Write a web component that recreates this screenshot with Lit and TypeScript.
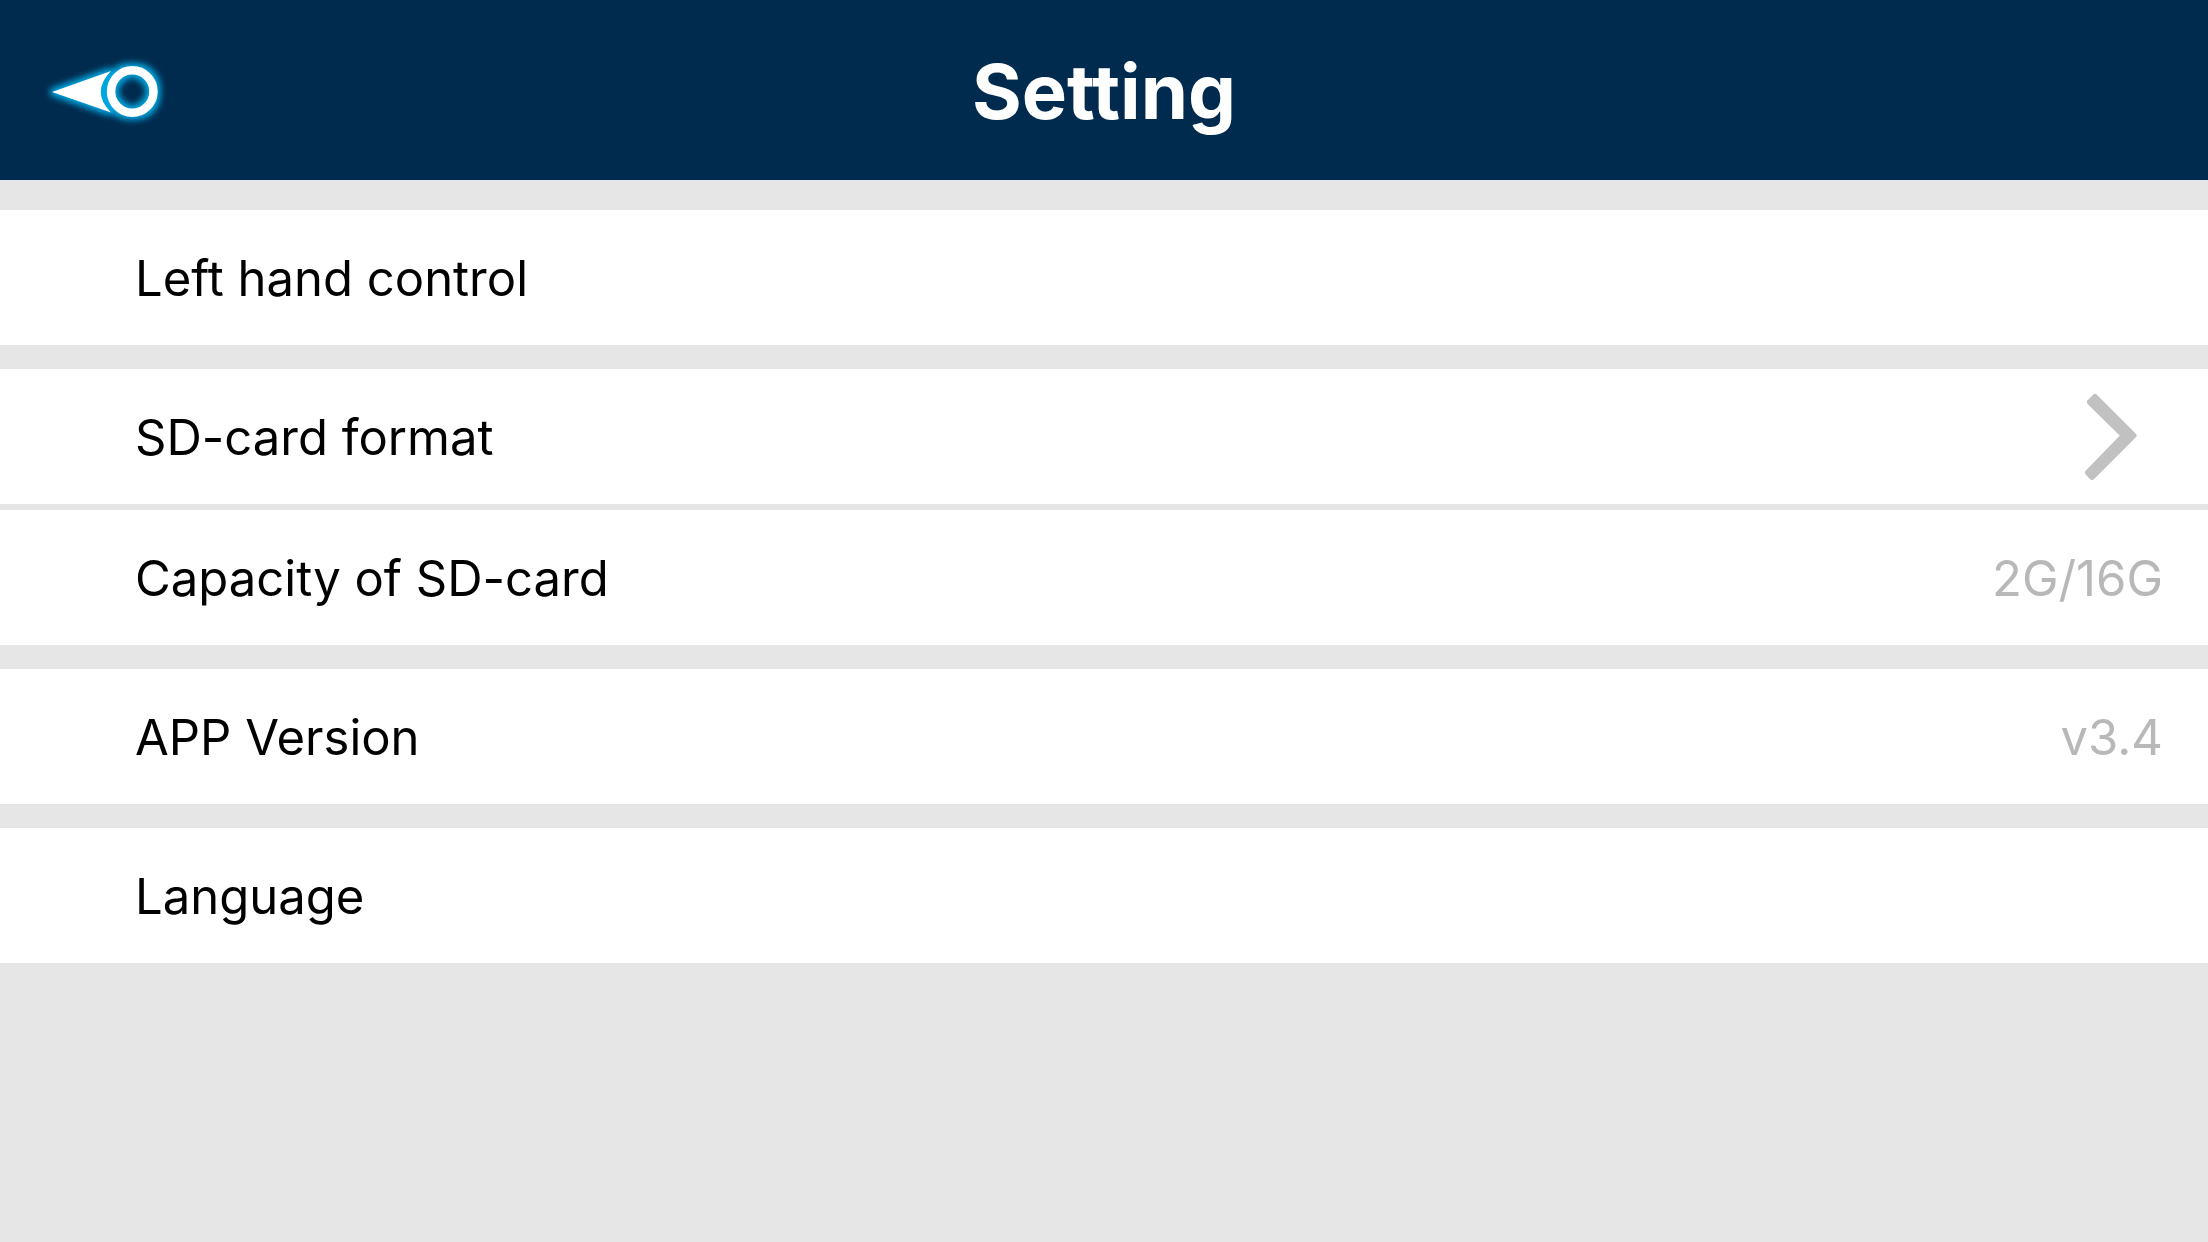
import { LitElement, html, css, nothing } from "lit";
import { customElement } from "lit/decorators.js";

interface SettingItem {
  label: string;
  value?: string;
  action?: boolean;
  chevron?: boolean;
}

const GROUPS: SettingItem[][] = [
  [{ label: "Left hand control", action: true }],
  [
    { label: "SD-card format", action: true, chevron: true },
    { label: "Capacity of SD-card", value: "2G/16G" },
  ],
  [{ label: "APP Version", value: "v3.4" }],
  [{ label: "Language", action: true }],
];

@customElement("app-root")
export class AppRoot extends LitElement {
  static styles = css`
    :host {
      display: flex;
      flex-direction: column;
      min-height: 100vh;
      background: #e6e6e6;
      color: #000;
      font-family: Inter, "Liberation Sans", sans-serif;
      font-size: 49px;
      line-height: 60px;
    }
    .header {
      display: grid;
      grid-template-columns: 1fr auto 1fr;
      align-items: center;
      height: 180px;
      padding: 0 36px;
      background: #002b4e;
      color: #fff;
    }
    .title {
      margin: 0;
      padding-top: 2px;
      font-size: 76px;
      line-height: 90px;
      font-weight: 700;
    }
    button {
      border: 0;
      margin: 0;
      font: inherit;
      color: inherit;
      text-align: left;
      cursor: pointer;
    }
    .back {
      justify-self: start;
      padding: 0;
      background: none;
    }
    .back svg,
    .chevron {
      display: block;
    }
    .groups {
      display: flex;
      flex-direction: column;
      gap: 24px;
      padding-top: 30px;
    }
    .group {
      display: flex;
      flex-direction: column;
      gap: 6px;
      margin: 0;
      padding: 0;
      list-style: none;
    }
    .row {
      box-sizing: border-box;
      display: flex;
      align-items: center;
      justify-content: space-between;
      width: 100%;
      height: 135px;
      padding: 2px 45px 0 135px;
      background: #fff;
    }
    .value {
      color: #b8b8b8;
    }
    .chevron {
      margin-right: 18px;
    }
  `;

  private backIcon() {
    return html`<svg width="140" height="100" viewBox="0 0 140 100" aria-hidden="true">
      <defs>
        <filter id="glow" x="-20%" y="-40%" width="140%" height="180%" color-interpolation-filters="sRGB">
          <feMorphology in="SourceAlpha" operator="dilate" radius="3" result="wide" />
          <feGaussianBlur in="wide" stdDeviation="3" result="soft" />
          <feFlood flood-color="#00a6e0" />
          <feComposite in2="soft" operator="in" result="halo" />
          <feMerge>
            <feMergeNode in="halo" />
            <feMergeNode in="SourceGraphic" />
          </feMerge>
        </filter>
      </defs>
      <g filter="url(#glow)">
        <path d="M16 52 L75 31 Q54.500 52 75 72.500 Z" fill="#fff" />
        <circle cx="96.300" cy="51.500" r="21.200" fill="none" stroke="#fff" stroke-width="8.500" />
      </g>
    </svg>`;
  }

  private chevronIcon() {
    return html`<svg class="chevron" width="60" height="96" viewBox="0 0 60 96" aria-hidden="true">
      <path
        d="M10 7 L48.500 45.500 L7 87 L3 82.500 L39 45.500 L5 12 Z"
        fill="#c1c1c1"
        stroke="#c1c1c1"
        stroke-width="6"
        stroke-linejoin="round"
      />
    </svg>`;
  }

  private row(item: SettingItem) {
    const content = html`<span>${item.label}</span>
      ${item.value ? html`<span class="value">${item.value}</span>` : nothing}
      ${item.chevron ? this.chevronIcon() : nothing}`;
    return html`<li>
      ${item.action
        ? html`<button class="row" type="button">${content}</button>`
        : html`<div class="row">${content}</div>`}
    </li>`;
  }

  render() {
    return html`
      <header class="header">
        <button class="back" type="button" aria-label="Back">${this.backIcon()}</button>
        <h1 class="title">Setting</h1>
      </header>
      <main class="groups">
        ${GROUPS.map(
          (group) => html`<ul class="group">
            ${group.map((item) => this.row(item))}
          </ul>`
        )}
      </main>
    `;
  }
}
